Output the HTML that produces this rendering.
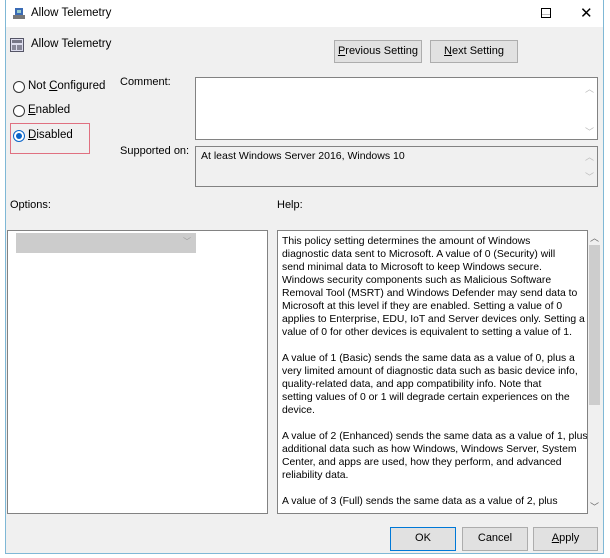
<!DOCTYPE html>
<html><head><style>
*{margin:0;padding:0;box-sizing:border-box}
body{width:610px;height:558px;background:#fff;position:relative;font-family:"Liberation Sans",sans-serif;font-size:11px;color:#000;overflow:hidden}
.win{position:absolute;left:5px;top:0;width:599px;height:554px;border:1px solid #7fb8d6;border-top:none;background:#f0f0f0}
.tb{position:absolute;left:0;top:0;width:597px;height:27px;background:#fff}
.a{position:absolute;white-space:nowrap}
.box{position:absolute;background:#fff;border:1px solid #a0a0a0}
.btn{position:absolute;background:#e1e1e1;border:1px solid #adadad;text-align:center;line-height:21px;font-size:11px}
.rad{position:absolute;width:12px;height:12px;border:1px solid #333;border-radius:50%;background:#fff}
.help{position:absolute;left:277px;top:230px;width:311px;height:284px;background:#fff;border:1px solid #828282;padding:4px 0 0 4px;line-height:13px;font-size:10.4px;white-space:pre;overflow:hidden}
</style></head><body>
<div class="win">
 <div class="tb"></div>
</div>
<svg class="a" style="left:12px;top:7px" width="14" height="14"><rect x="3" y="1" width="8" height="7" fill="#3a6bb5"/><rect x="1" y="8" width="12" height="4" fill="#777"/><rect x="5" y="3" width="4" height="3" fill="#9cc"/></svg>
<div class="a" style="left:31px;top:7px;font-size:11.5px">Allow Telemetry</div>
<div class="a" style="left:541px;top:14px;width:10px;height:1px;background:#bbb"></div>
<div class="a" style="left:541px;top:8px;width:10px;height:10px;border:1px solid #000"></div>
<div class="a" style="left:580px;top:4px;font-size:15px">✕</div>
<svg class="a" style="left:10px;top:38px" width="14" height="14"><rect x="0.5" y="0.5" width="13" height="13" fill="#dde" stroke="#556"/><rect x="2" y="2" width="10" height="3" fill="#778"/><rect x="2" y="7" width="4" height="5" fill="#889"/><rect x="7" y="7" width="5" height="5" fill="#889"/></svg>
<div class="a" style="left:31px;top:38px;font-size:11.5px">Allow Telemetry</div>
<div class="btn" style="left:334px;top:40px;width:88px;height:23px"><u>P</u>revious Setting</div>
<div class="btn" style="left:430px;top:40px;width:88px;height:23px"><u>N</u>ext Setting</div>
<div class="rad" style="left:13px;top:81px"></div><div class="a" style="left:28px;top:80px;font-size:11.5px">Not <u>C</u>onfigured</div>
<div class="rad" style="left:13px;top:105px"></div><div class="a" style="left:28px;top:104px;font-size:11.5px"><u>E</u>nabled</div>
<div class="rad" style="left:13px;top:130px;border-color:#0a64c8"><div style="position:absolute;left:2px;top:2px;width:6px;height:6px;border-radius:50%;background:#0a64c8"></div></div><div class="a" style="left:28px;top:129px;font-size:11.5px"><u>D</u>isabled</div>
<div class="a" style="left:10px;top:123px;width:80px;height:31px;border:1px solid #e07080"></div>
<div class="a" style="left:120px;top:76px">Comment:</div>
<div class="box" style="left:195px;top:77px;width:403px;height:63px;border-color:#828282"></div>
<div class="a" style="left:585px;top:82px;color:#bbb;font-size:9px">︿</div>
<div class="a" style="left:585px;top:125px;color:#bbb;font-size:9px">﹀</div>
<div class="a" style="left:120px;top:145px">Supported on:</div>
<div class="box" style="left:195px;top:146px;width:403px;height:41px;background:#f0f0f0;border-color:#828282"></div>
<div class="a" style="left:201px;top:150px;font-size:10.5px">At least Windows Server 2016, Windows 10</div>
<div class="a" style="left:585px;top:150px;color:#bbb;font-size:9px">︿</div>
<div class="a" style="left:585px;top:170px;color:#bbb;font-size:9px">﹀</div>
<div class="a" style="left:10px;top:199px">Options:</div>
<div class="a" style="left:277px;top:199px">Help:</div>
<div class="box" style="left:7px;top:230px;width:261px;height:284px;border-color:#828282"></div>
<div class="a" style="left:16px;top:233px;width:180px;height:20px;background:#cccccc"></div>
<div class="a" style="left:183px;top:236px;color:#999;font-size:8px">﹀</div>
<div class="help">This policy setting determines the amount of Windows
diagnostic data sent to Microsoft. A value of 0 (Security) will
send minimal data to Microsoft to keep Windows secure.
Windows security components such as Malicious Software
Removal Tool (MSRT) and Windows Defender may send data to
Microsoft at this level if they are enabled. Setting a value of 0
applies to Enterprise, EDU, IoT and Server devices only. Setting a
value of 0 for other devices is equivalent to setting a value of 1.

A value of 1 (Basic) sends the same data as a value of 0, plus a
very limited amount of diagnostic data such as basic device info,
quality-related data, and app compatibility info. Note that
setting values of 0 or 1 will degrade certain experiences on the
device.

A value of 2 (Enhanced) sends the same data as a value of 1, plus
additional data such as how Windows, Windows Server, System
Center, and apps are used, how they perform, and advanced
reliability data.

A value of 3 (Full) sends the same data as a value of 2, plus</div>
<div class="a" style="left:588px;top:230px;width:13px;height:284px;background:#f0f0f0"></div>
<div class="a" style="left:589px;top:245px;width:11px;height:160px;background:#cdcdcd"></div>
<div class="a" style="left:590px;top:231px;color:#666;font-size:9px">︿</div>
<div class="a" style="left:590px;top:500px;color:#666;font-size:9px">﹀</div>
<div class="btn" style="left:390px;top:527px;width:66px;height:24px;border:1px solid #0078d7">OK</div>
<div class="btn" style="left:462px;top:527px;width:66px;height:24px">Cancel</div>
<div class="btn" style="left:533px;top:527px;width:65px;height:24px"><u>A</u>pply</div>
</body></html>
